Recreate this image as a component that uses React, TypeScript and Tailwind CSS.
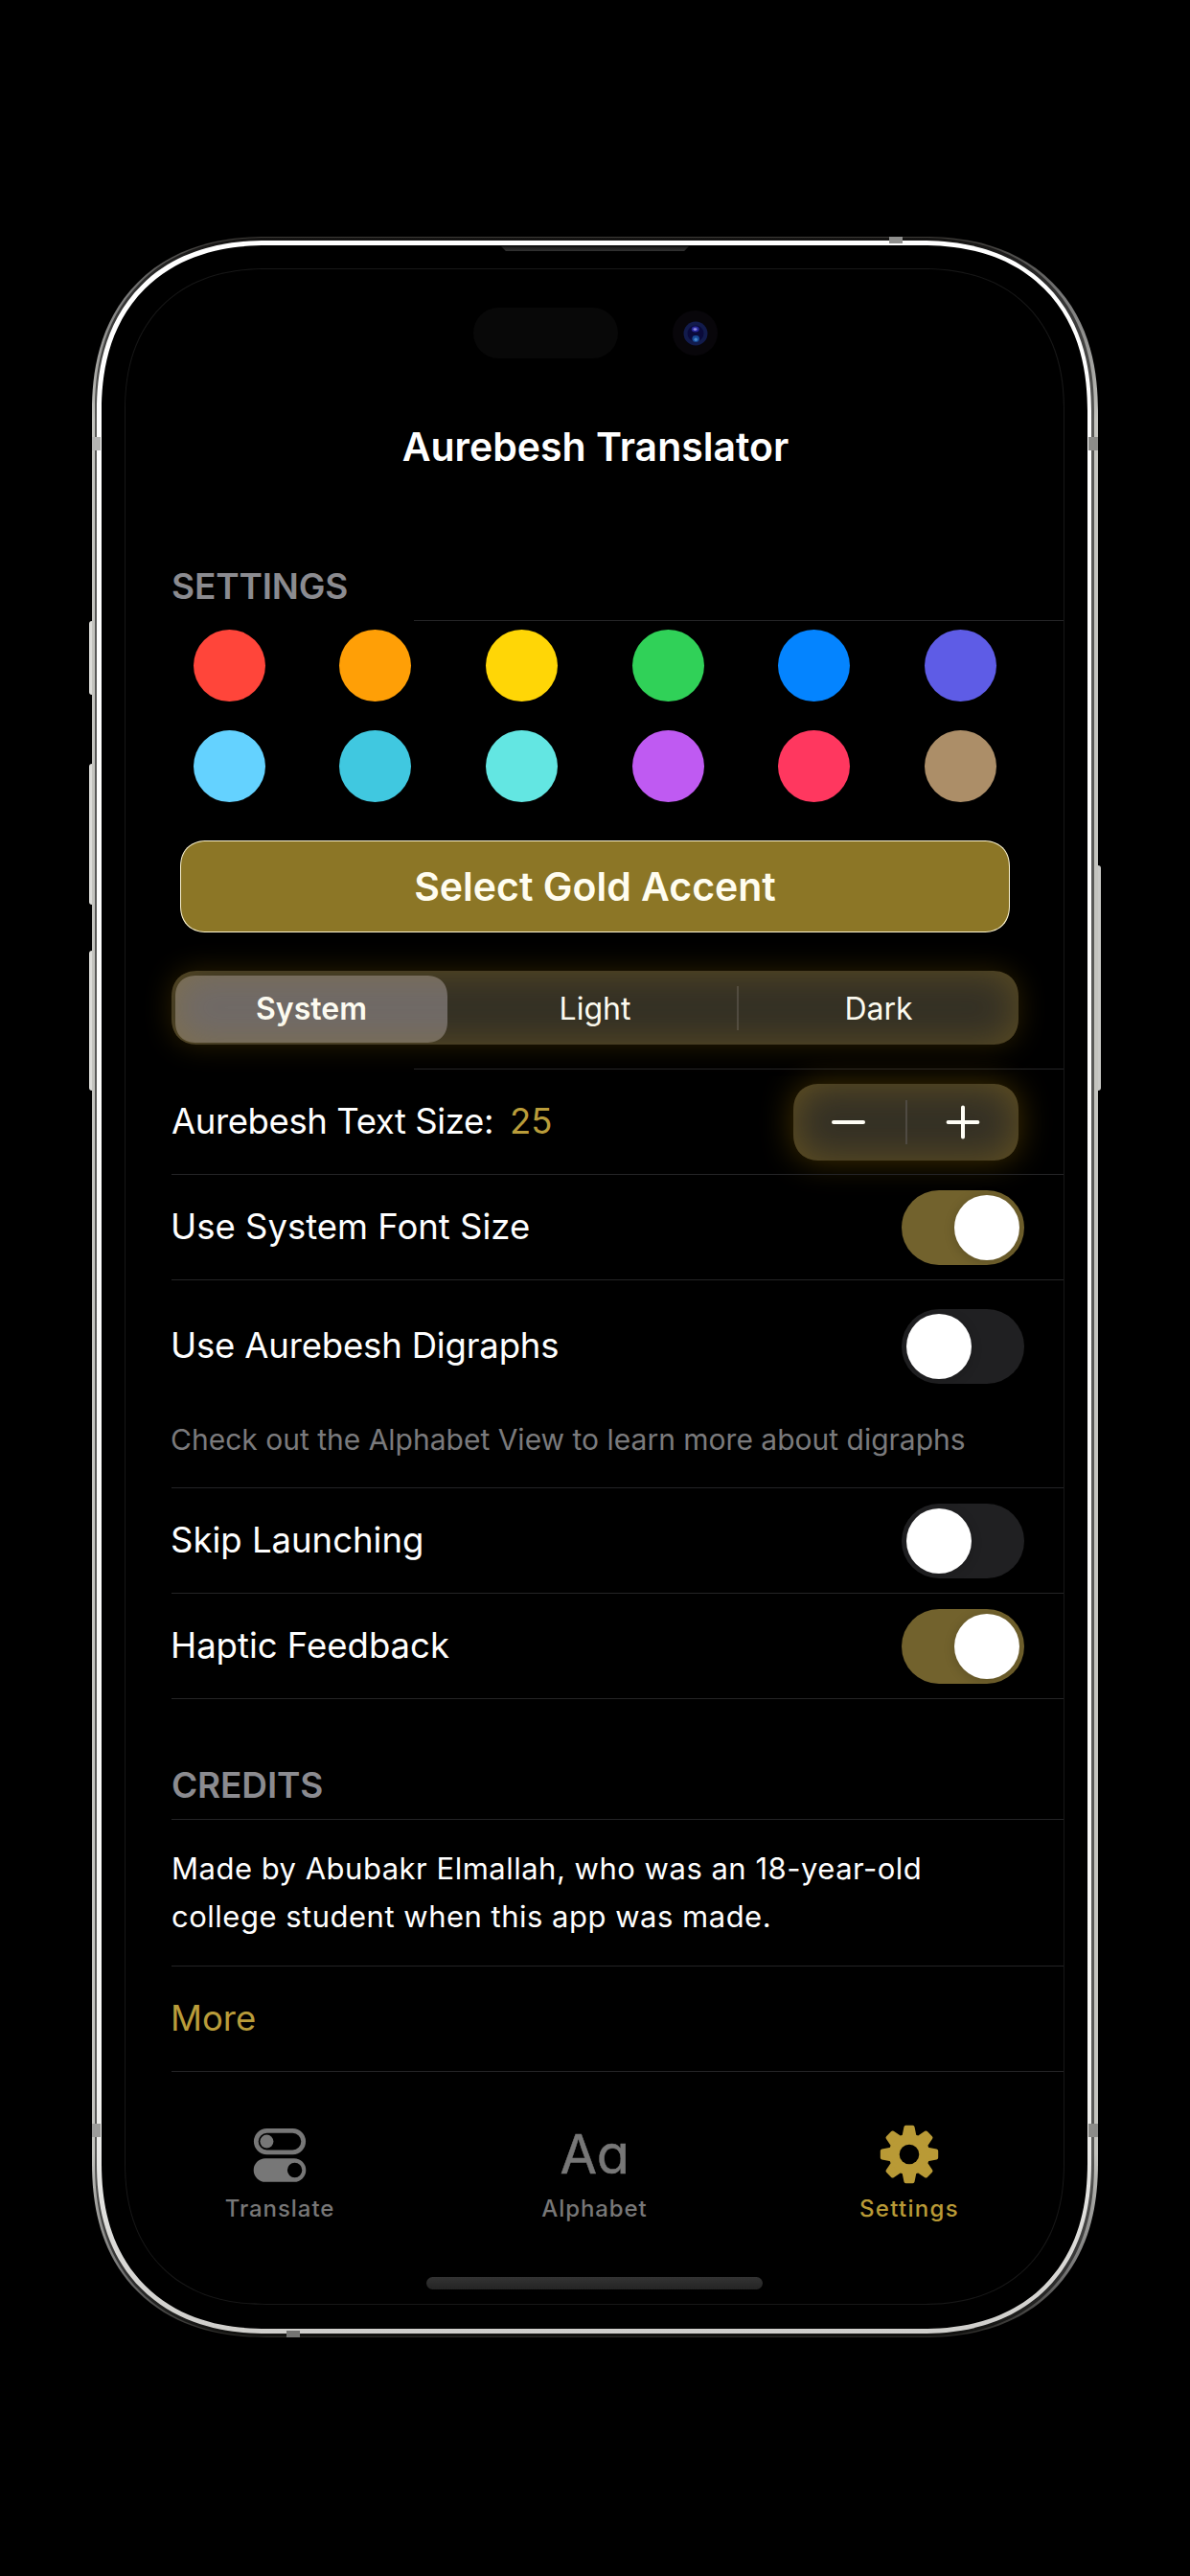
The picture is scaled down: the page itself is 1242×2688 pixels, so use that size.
import React from "react";

const swatches = [
  "bg-[#ff453a]",
  "bg-[#ff9f06]",
  "bg-[#ffd606]",
  "bg-[#30d158]",
  "bg-[#0484ff]",
  "bg-[#5e5ce6]",
  "bg-[#64d2ff]",
  "bg-[#40c8e0]",
  "bg-[#63e6e2]",
  "bg-[#bf5af2]",
  "bg-[#ff375f]",
  "bg-[#ac8e68]",
];

function Divider({ inset = false }: { inset?: boolean }) {
  return <div className={`h-px shrink-0 bg-[#242426] ${inset ? "ml-[301px]" : "ml-[48px]"}`} />;
}

function SectionHeader({ children }: { children: React.ReactNode }) {
  return (
    <h2 className="flex h-[71px] shrink-0 items-center pl-[48px] text-[37px] leading-none font-semibold tracking-[-0.15px] text-[#8b8b90]">
      {children}
    </h2>
  );
}

function Toggle({ on }: { on: boolean }) {
  return (
    <div
      className={`mt-px flex h-[78px] w-[128px] items-center rounded-full px-[5px] ${
        on ? "justify-end bg-[#72622d]" : "justify-start bg-[#202022]"
      }`}
    >
      <div className="size-[68px] rounded-full bg-white shadow-[0_2px_12px_rgba(0,0,0,0.18)]" />
    </div>
  );
}

function Row({ label, on, className, tracking }: { label: string; on: boolean; className: string; tracking: string }) {
  return (
    <div className={`flex shrink-0 items-center justify-between pr-[41px] pl-[47px] ${className}`}>
      <span className={`text-[36.5px] leading-none ${tracking}`}>{label}</span>
      <Toggle on={on} />
    </div>
  );
}

function SwitchesIcon() {
  return (
    <svg className="size-[60px]" viewBox="0 0 60 60" fill="none">
      <rect x="5.3" y="5.4" width="49.4" height="22.4" rx="11.2" stroke="currentColor" strokeWidth="4.8" />
      <circle cx="16.4" cy="16.6" r="7" fill="currentColor" />
      <path
        fillRule="evenodd"
        fill="currentColor"
        d="M15 34.2h30a12.3 12.3 0 0 1 0 24.6H15a12.3 12.3 0 0 1 0-24.6Zm30.6 4.6a7.7 7.7 0 1 0 0 15.4a7.7 7.7 0 0 0 0-15.4Z"
      />
    </svg>
  );
}

function GearIcon() {
  return (
    <svg className="size-[62px]" viewBox="-31 -31 62 62">
      <mask id="gear-hole">
        <rect x="-31" y="-31" width="62" height="62" fill="white" />
        <circle r="10.3" fill="black" />
      </mask>
      <g mask="url(#gear-hole)" fill="currentColor" stroke="currentColor" strokeLinejoin="round">
        <circle r="21" strokeWidth="1" />
        {[0, 45, 90, 135, 180, 225, 270, 315].map((a) => (
          <path key={a} strokeWidth="4" transform={`rotate(${a})`} d="M-5.4-19L-3.6-28.2H3.6L5.4-19Z" />
        ))}
      </g>
    </svg>
  );
}

function Tab({ label, tone, tracking, children }: { label: string; tone: string; tracking: string; children: React.ReactNode }) {
  return (
    <div className={`flex w-[328.5px] shrink-0 flex-col items-center ${tone}`}>
      <div className="flex h-[62px] items-center justify-center">{children}</div>
      <span className={`mt-[14px] text-[24px] leading-[24px] font-medium ${tracking}`}>{label}</span>
    </div>
  );
}

export default function App() {
  return (
    <div className="h-[2688px] w-[1242px] overflow-hidden bg-black pt-[247px] pl-[96px] font-['Inter',sans-serif] text-white antialiased">
      <div className="relative h-[2192px] w-[1050px]">
        {/* Side buttons */}
        <div className="absolute top-[401px] left-[-3px] h-[77px] w-[6px] rounded-[3px] bg-[#dcdcd8]" />
        <div className="absolute top-[550px] left-[-3px] h-[147px] w-[6px] rounded-[3px] bg-[#dcdcd8]" />
        <div className="absolute top-[745px] left-[-3px] h-[146px] w-[6px] rounded-[3px] bg-[#dcdcd8]" />
        <div className="absolute top-[656px] right-[-3px] h-[235px] w-[6px] rounded-[3px] bg-[#c9c9c6]" />

        {/* Metal frame layers */}
        <div className="relative h-full w-full rounded-[182px] bg-[linear-gradient(180deg,#3a3835_0px,#777_60px,#c4c4bf_190px,#c4c4bf_2000px,#777_2120px,#2a2926_2192px)] pt-px pr-[4px] pb-px pl-[3px] [corner-shape:superellipse(1.19)]">
          <div className="h-full w-full rounded-[180px] bg-[linear-gradient(180deg,#141312_0px,#333_60px,#5a5a58_190px,#5a5a58_2000px,#333_2120px,#11110f_2190px)] pt-[2.5px] pr-[3px] pb-[3px] pl-[2px] [corner-shape:superellipse(1.19)]">
            <div className="h-full w-full rounded-[178px] bg-[linear-gradient(180deg,#fff_0px,#f6f6f4_1900px,#cfcecb_2184px)] pt-[5px] pr-[4px] pb-[5px] pl-[5px] [corner-shape:superellipse(1.19)]">
              <div className="h-full w-full rounded-[173px] bg-black pt-[24.5px] pr-[24px] pb-[25px] pl-[24px] [corner-shape:superellipse(1.19)]">
                {/* Screen */}
                <div className="flex h-[2125px] w-[981px] flex-col overflow-hidden rounded-[148px] border border-[#171717] [corner-shape:superellipse(1.19)]">
                  <div className="mt-[40px] flex h-[53px] shrink-0 items-center pl-[363px]">
                    <div className="h-[53px] w-[151px] rounded-full bg-[#080808]" />
                    <div className="ml-[57px] flex size-[47px] items-center justify-center rounded-full bg-[#08060a]">
                      <svg className="size-[26px]" viewBox="0 0 26 26">
                        <circle cx="13" cy="13" r="12.5" fill="#121b4c" />
                        <circle cx="13" cy="13" r="8.5" fill="#0a0a3a" />
                        <ellipse cx="12.7" cy="8.6" rx="4" ry="3" fill="#27279a" />
                        <ellipse cx="12.5" cy="8.6" rx="2" ry="1.4" fill="#8a8ae0" />
                        <ellipse cx="13.2" cy="18.5" rx="3.8" ry="3.4" fill="#174a96" />
                        <circle cx="13.2" cy="19.2" r="1.8" fill="#4585c8" />
                      </svg>
                    </div>
                  </div>

                  <h1 className="flex h-[185px] shrink-0 items-center justify-center pl-[2px] text-[41px] leading-none font-semibold">
                    Aurebesh Translator
                  </h1>

                  <div className="mt-[17px] shrink-0">
                    <SectionHeader>SETTINGS</SectionHeader>
                  </div>
                  <Divider inset />

                  <div className="grid shrink-0 grid-cols-6 gap-y-[30px] pt-[9px] pr-[31px] pl-[32px]">
                    {swatches.map((c) => (
                      <div key={c} className={`size-[75px] justify-self-center rounded-full ${c}`} />
                    ))}
                  </div>

                  <button className="mt-[40px] ml-[57px] flex h-[96px] w-[866px] shrink-0 items-center justify-center rounded-[28px] border border-[#fbf3cf] bg-[#8c7626] text-[41px] leading-none font-semibold text-[#fffdf0] [corner-shape:superellipse(1.19)]">
                    Select Gold Accent
                  </button>

                  <div className="relative mt-[40px] ml-[48px] flex h-[77px] w-[884px] shrink-0 items-center rounded-[28px] bg-[#343025] text-[32px] leading-none text-[#fffef6] shadow-[0_0_30px_rgba(130,95,0,0.34)] [corner-shape:superellipse(1.19)]">
                    <div className="mt-[5px] ml-[4px] flex h-[70px] w-[284px] items-center justify-center self-start rounded-[22px] bg-[#706a68] font-semibold [corner-shape:superellipse(1.19)]">
                      System
                    </div>
                    <div className="flex w-[302px] items-center justify-center pt-[3px] pl-[6px]">Light</div>
                    <div className="h-[46px] w-[2px] bg-[#4f4a42]" />
                    <div className="flex flex-1 items-center justify-center pt-[3px]">Dark</div>
                    <div className="absolute inset-0 rounded-[28px] shadow-[inset_0_0_40px_rgba(150,118,30,0.42)] [corner-shape:superellipse(1.19)]" />
                  </div>

                  <div className="h-[25px] shrink-0" />
                  <Divider inset />

                  <div className="flex h-[109px] shrink-0 items-center justify-between pr-[47px] pl-[48px]">
                    <div className="flex items-center text-[36.5px] leading-none">
                      <span className="tracking-[-0.4px]">Aurebesh Text Size:</span>
                      <span className="ml-[17px] text-[#b99c3a]">25</span>
                    </div>
                    <div className="flex h-[80px] w-[235px] items-center rounded-[28px] bg-[#343025] shadow-[0_0_34px_rgba(140,102,0,0.48),inset_0_0_40px_rgba(150,118,30,0.5)] [corner-shape:superellipse(1.19)]">
                      <div className="flex flex-1 items-center justify-center">
                        <div className="mr-px h-[4px] w-[35px] rounded-full bg-[#fffef6]" />
                      </div>
                      <div className="h-[46px] w-[2px] bg-[#4f4a42]" />
                      <div className="flex flex-1 items-center justify-center">
                        <svg className="size-[36px]" viewBox="0 0 36 36" stroke="#fffef6" strokeWidth="4" strokeLinecap="round">
                          <path d="M2.6 18H33.4M18 2.6V33.4" />
                        </svg>
                      </div>
                    </div>
                  </div>
                  <Divider />

                  <Row label="Use System Font Size" on className="h-[109px]" tracking="tracking-normal" />
                  <Divider />

                  <Row label="Use Aurebesh Digraphs" on={false} className="h-[136px]" tracking="tracking-[-0.17px]" />
                  <p className="flex h-[80px] shrink-0 items-center pb-[20px] pl-[47px] text-[30px] leading-none whitespace-nowrap text-[#7a7a7c]">
                    Check out the Alphabet View to learn more about digraphs
                  </p>
                  <Divider />

                  <Row label="Skip Launching" on={false} className="h-[109px]" tracking="tracking-normal" />
                  <Divider />

                  <Row label="Haptic Feedback" on className="h-[109px]" tracking="tracking-normal" />
                  <Divider />

                  <div className="mt-[54px] shrink-0">
                    <SectionHeader>CREDITS</SectionHeader>
                  </div>
                  <Divider />

                  <p className="shrink-0 py-[26px] pl-[48px] text-[31px] leading-[50px] tracking-[0.5px] whitespace-nowrap">
                    Made by Abubakr Elmallah, who was an 18-year-old
                    <br />
                    college student when this app was made.
                  </p>
                  <Divider />

                  <a className="flex h-[109px] shrink-0 items-center pl-[47px] text-[36.5px] leading-none text-[#b99c3a]">More</a>
                  <Divider />

                  <nav className="mt-[55px] flex shrink-0 justify-center">
                    <Tab label="Translate" tone="text-[#777777]" tracking="tracking-[0.95px]">
                      <SwitchesIcon />
                    </Tab>
                    <Tab label="Alphabet" tone="text-[#777777]" tracking="tracking-[0.9px]">
                      <span className="text-[56px] leading-none font-normal tracking-[-0.5px] [-webkit-text-stroke:0.5px_#777777] [font-feature-settings:'cv11'] [stroke-linejoin:round]">
                        Aa
                      </span>
                    </Tab>
                    <Tab label="Settings" tone="text-[#b99a36]" tracking="tracking-[1.3px]">
                      <GearIcon />
                    </Tab>
                  </nav>

                  <div className="mt-[59px] h-[13px] w-[351px] shrink-0 self-center rounded-full bg-[linear-gradient(180deg,#333,#242424)]" />
                </div>
              </div>
            </div>
          </div>
        </div>

        {/* Speaker slot */}
        <div className="absolute top-[10px] left-[427px] h-[5px] w-[196px] bg-[linear-gradient(180deg,#161616,#333)] [clip-path:polygon(0_0,100%_0,97.5%_100%,2.5%_100%)]" />

        {/* Antenna bands */}
        <div className="absolute top-0 left-[832px] h-[7px] w-[14px] bg-[#8f8f8d]" />
        <div className="absolute bottom-0 left-[203px] h-[7px] w-[14px] bg-[#747472]" />
        <div className="absolute top-[209px] left-0 h-[14px] w-[9px] bg-[#b4b4b2]" />
        <div className="absolute top-[209px] right-0 h-[14px] w-[10px] bg-[#8c8c89]" />
        <div className="absolute top-[1969px] left-0 h-[14px] w-[9px] bg-[#9c9c9a]" />
        <div className="absolute top-[1969px] right-0 h-[14px] w-[10px] bg-[#8c8c89]" />
      </div>
    </div>
  );
}
